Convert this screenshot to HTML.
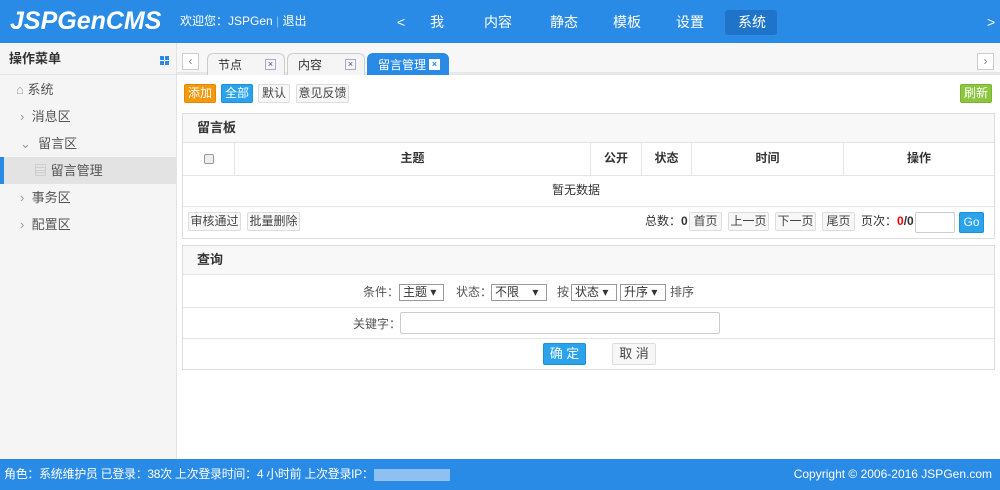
<!DOCTYPE html>
<html><head><meta charset="utf-8"><style>
*{box-sizing:border-box;margin:0;padding:0}
body{width:1000px;height:490px;overflow:hidden;position:relative;font-family:"Liberation Sans","Noto Sans CJK SC",sans-serif;font-size:12px;line-height:14px;color:#333;background:#fff}
.abs{position:absolute}
#hd{left:0;top:0;width:1000px;height:43px;background:#2a8be6;color:#fff}
.logo{left:10px;top:6px;font-size:25px;line-height:30px;font-style:italic;font-weight:bold;color:#fff}
.nav{top:14px;font-size:14px;line-height:16px}
#side{left:0;top:43px;width:177px;height:416px;background:#f5f5f5;border-right:1px solid #e3e3e3}
.si{position:absolute;left:20px;font-size:13px;line-height:16px;color:#555}
#tabs{left:177px;top:43px;width:823px;height:32px;background:#f7f7f7;border-bottom:3px solid #e8e8e8}
.tab{position:absolute;top:10px;height:22px;border:1px solid #ccc;border-bottom:none;border-radius:6px 6px 0 0;background:#f5f5f5;font-size:12px;line-height:14px;padding:4px 0 0 10px}
.x{position:absolute;right:8px;top:5px;width:11px;height:11px;border:1px solid #aac;font-size:9px;line-height:9px;text-align:center;color:#357}
.btn{position:absolute;height:19px;border:1px solid #ddd;border-radius:2px;background:#f7f7f7;font-size:12px;text-align:center;line-height:17px;color:#444}
.panel{position:absolute;left:182px;width:813px;border:1px solid #ddd}
.ph{height:29px;background:#f8f8f8;border-bottom:1px solid #e3e3e3;font-weight:bold;font-size:13px;line-height:16px;padding:6px 0 0 14px}
.row{position:absolute;left:0;width:811px;border-bottom:1px solid #e5e5e5}
.th{position:absolute;top:0;height:33px;border-right:1px solid #e5e5e5;text-align:center;line-height:31px;font-weight:bold}
.sel{position:absolute;height:17px;border:1px solid #999;background:#fff;font-size:12px;line-height:15px;padding-left:3px}
</style></head><body>
<div id="hd" class="abs">
 <div class="abs logo">JSPGenCMS</div>
 <div class="abs" style="left:180px;top:14px;font-size:12px">欢迎您：JSPGen <span style="color:#8cc0f0">|</span> 退出</div>
 <div class="abs nav" style="left:397px">&lt;</div>
 <div class="abs nav" style="left:430px">我</div>
 <div class="abs nav" style="left:484px">内容</div>
 <div class="abs nav" style="left:550px">静态</div>
 <div class="abs nav" style="left:613px">模板</div>
 <div class="abs" style="left:725px;top:10px;width:52px;height:25px;background:#1f74c9;border-radius:3px"></div>
 <div class="abs nav" style="left:676px">设置</div>
 <div class="abs nav" style="left:738px">系统</div>
 <div class="abs nav" style="left:987px">&gt;</div>
</div>
<div id="side" class="abs">
 <div class="abs" style="left:0;top:0;width:176px;height:32px;border-bottom:1px solid #e3e3e3;font-size:13px;line-height:16px;font-weight:bold;padding:8px 0 0 9px">操作菜单</div>
 <div class="abs" style="left:160px;top:13px;width:9px;height:9px;background:linear-gradient(#fff,#fff) 4px 0/1px 9px no-repeat,linear-gradient(#fff,#fff) 0 4px/9px 1px no-repeat,#2a8be6"></div>
 <div class="si" style="top:39px;left:16px"><span style="color:#999">&#8962;</span> 系统</div>
 <div class="si" style="top:66px"><span style="color:#999">›</span>&nbsp; 消息区</div>
 <div class="si" style="top:93px"><span style="color:#999">⌄</span>&nbsp; 留言区</div>
 <div class="abs" style="left:0;top:114px;width:176px;height:27px;background:#e3e3e3;border-left:4px solid #2a8be6"></div>
 <div class="si" style="top:120px;left:34px"><span style="color:#bbb">▤</span> 留言管理</div>
 <div class="si" style="top:147px"><span style="color:#999">›</span>&nbsp; 事务区</div>
 <div class="si" style="top:174px"><span style="color:#999">›</span>&nbsp; 配置区</div>
</div>
<div id="tabs" class="abs">
 <div class="abs" style="left:5px;top:10px;width:17px;height:17px;border:1px solid #ccc;background:#fff;text-align:center;line-height:15px;color:#888">‹</div>
 <div class="tab" style="left:30px;width:78px">节点<span class="x">×</span></div>
 <div class="tab" style="left:110px;width:78px">内容<span class="x">×</span></div>
 <div class="tab" style="left:190px;width:82px;background:#2a8be6;border-color:#2a8be6;color:#fff">留言管理<span class="x" style="background:#fff;color:#2a8be6;border-color:#fff;font-weight:bold">×</span></div>
 <div class="abs" style="left:800px;top:10px;width:17px;height:17px;border:1px solid #ccc;background:#fff;text-align:center;line-height:15px;color:#888">›</div>
</div>
<div class="btn" style="left:184px;top:84px;width:32px;background:#f59a0e;border-color:#e08a00;color:#fff">添加</div>
<div class="btn" style="left:221px;top:84px;width:32px;background:#2aa3ec;border-color:#1e90d8;color:#fff">全部</div>
<div class="btn" style="left:258px;top:84px;width:32px">默认</div>
<div class="btn" style="left:296px;top:84px;width:53px">意见反馈</div>
<div class="btn" style="left:960px;top:84px;width:32px;background:#8cc63f;border-color:#7ab530;color:#fff">刷新</div>

<div class="panel" style="top:113px;height:126px">
 <div class="ph">留言板</div>
 <div class="row" style="top:29px;height:33px">
  <div class="th" style="left:0;width:52px"><span style="display:inline-block;width:10px;height:10px;border:1px solid #999;border-radius:2px;background:#eee;vertical-align:middle"></span></div>
  <div class="th" style="left:52px;width:356px">主题</div>
  <div class="th" style="left:408px;width:51px">公开</div>
  <div class="th" style="left:459px;width:50px">状态</div>
  <div class="th" style="left:509px;width:152px">时间</div>
  <div class="th" style="left:661px;width:150px;border:none">操作</div>
 </div>
 <div class="row" style="top:62px;height:31px;text-align:center;line-height:28px;padding-right:25px">暂无数据</div>
 <div class="btn" style="left:5px;top:98px;width:53px">审核通过</div>
 <div class="btn" style="left:64px;top:98px;width:53px">批量删除</div>
 <div class="abs" style="left:462px;top:100px">总数：<b>0</b></div>
 <div class="btn" style="left:506px;top:98px;width:33px">首页</div>
 <div class="btn" style="left:545px;top:98px;width:41px">上一页</div>
 <div class="btn" style="left:592px;top:98px;width:41px">下一页</div>
 <div class="btn" style="left:639px;top:98px;width:33px">尾页</div>
 <div class="abs" style="left:678px;top:100px">页次：<b style="color:#e00">0</b><b>/0</b></div>
 <div class="abs" style="left:732px;top:98px;width:40px;height:21px;border:1px solid #ccc;border-radius:2px"></div>
 <div class="btn" style="left:776px;top:98px;width:25px;height:21px;line-height:19px;background:#2aa3ec;border-color:#1e90d8;color:#fff">Go</div>
</div>

<div class="panel" style="top:245px;height:125px">
 <div class="ph">查询</div>
 <div class="row" style="top:30px;height:32px"></div>
 <div class="row" style="top:62px;height:31px"></div>
 <div class="abs" style="left:180px;top:39px;color:#555">条件：</div>
 <div class="sel" style="left:216px;top:38px;width:45px">主题 ▾</div>
 <div class="abs" style="left:273px;top:39px;color:#555">状态：</div>
 <div class="sel" style="left:308px;top:38px;width:56px">不限 &nbsp;&nbsp; ▾</div>
 <div class="abs" style="left:374px;top:39px;color:#555">按</div>
 <div class="sel" style="left:388px;top:38px;width:46px">状态 ▾</div>
 <div class="sel" style="left:437px;top:38px;width:46px">升序 ▾</div>
 <div class="abs" style="left:487px;top:39px;color:#555">排序</div>
 <div class="abs" style="left:170px;top:71px;color:#555">关键字：</div>
 <div class="abs" style="left:217px;top:66px;width:320px;height:22px;border:1px solid #ccc;border-radius:2px"></div>
 <div class="btn" style="left:360px;top:97px;width:43px;height:22px;line-height:20px;background:#2aa3ec;border-color:#1e90d8;color:#fff;font-size:13px">确 定</div>
 <div class="btn" style="left:429px;top:97px;width:44px;height:22px;line-height:20px;font-size:13px">取 消</div>
</div>

<div class="abs" style="left:0;top:459px;width:1000px;height:31px;background:#2a8be6;color:#fff;font-size:12px">
 <div class="abs" style="left:4px;top:8px;white-space:nowrap;letter-spacing:-0.3px">角色：系统维护员 已登录：38次 上次登录时间：4 小时前 上次登录IP：<span style="display:inline-block;width:76px;height:12px;background:#8fc0f2;vertical-align:middle"></span></div>
 <div class="abs" style="right:8px;top:8px">Copyright © 2006-2016 JSPGen.com</div>
</div>
</body></html>
